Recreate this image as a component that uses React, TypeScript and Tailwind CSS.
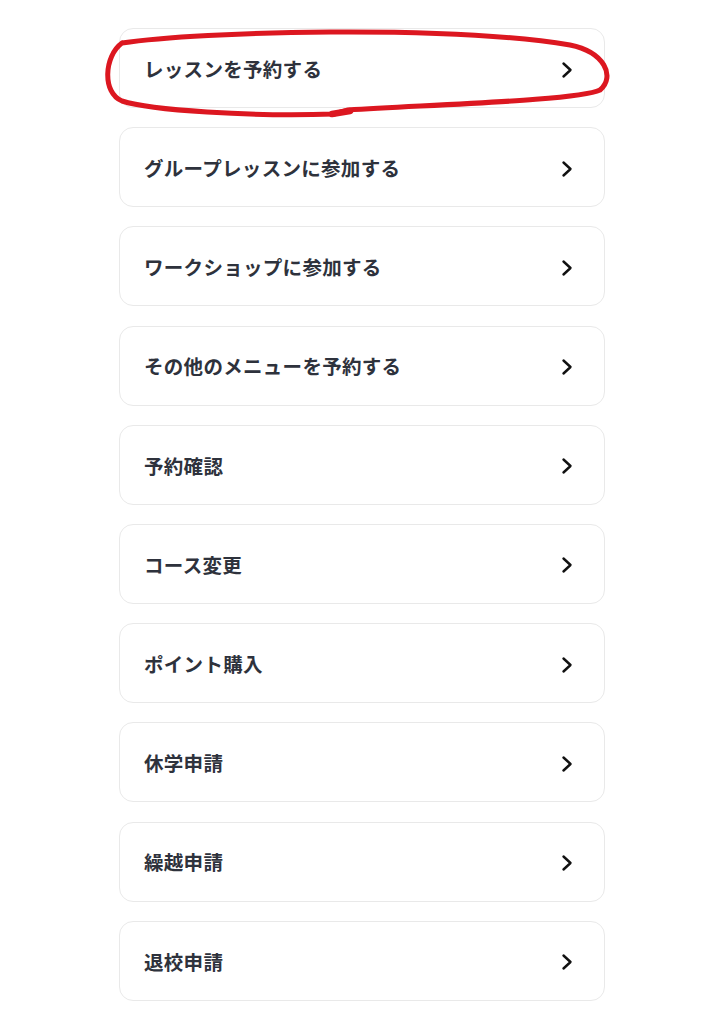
import React from 'react';

const items = [
  'レッスンを予約する',
  'グループレッスンに参加する',
  'ワークショップに参加する',
  'その他のメニューを予約する',
  '予約確認',
  'コース変更',
  'ポイント購入',
  '休学申請',
  '繰越申請',
  '退校申請',
];

const Chevron = () => (
  <svg width="12" height="18" viewBox="0 0 12 18" fill="none" className="mt-[3px] shrink-0">
    <path d="M2.5 2.5 L9.5 9 L2.5 15.5" stroke="#111" strokeWidth="2.4" strokeLinecap="round" strokeLinejoin="round" />
  </svg>
);

export default function App() {
  return (
    <div className="relative min-h-[1024px] w-full bg-white font-['Noto_Sans_CJK_JP','Noto_Sans',sans-serif]">
      <div className="mx-auto flex w-[486px] flex-col gap-[19.2px] pt-[28px]">
        {items.map((label) => (
          <div
            key={label}
            className="flex h-[80px] items-center justify-between rounded-[14px] border border-[#e9e9e9] bg-white pl-[24px] pr-[31px]"
          >
            <span className="pt-[1px] text-[19.5px] font-bold tracking-[0.3px] text-[#2e323c]">{label}</span>
            <Chevron />
          </div>
        ))}
      </div>

      {/* hand-drawn annotation */}
      <svg className="pointer-events-none absolute left-0 top-0" width="724" height="140" viewBox="0 0 724 140" fill="none">
        <path
          d="M122 43 C 200 31, 450 25, 570 45 C 604 52, 616 76, 600 90 C 580 100, 450 104, 348 110 L 334 114 C 250 117, 150 110, 122 101 C 102 93, 104 56, 122 43"
          stroke="#dc1720"
          strokeWidth="5"
          strokeLinecap="round"
          strokeLinejoin="round"
        />
        <path d="M332 114 L 350 111" stroke="#dc1720" strokeWidth="6.5" strokeLinecap="round" />
      </svg>
    </div>
  );
}
